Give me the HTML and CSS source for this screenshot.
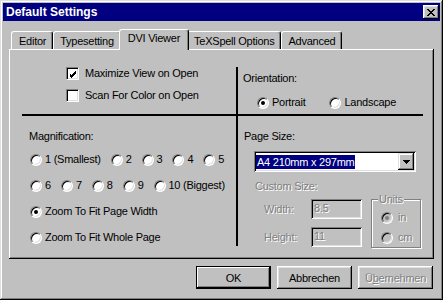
FILE: index.html
```html
<!DOCTYPE html>
<html lang="de">
<head>
  <meta charset="UTF-8" />
  <title>Default Settings</title>
  <link rel="stylesheet" href="styles.css">
</head>
<body>

  <div class="window">
    <div class="titlebar">
      <span class="title">Default Settings</span>
      <span class="close">
        <svg width="8" height="7" viewBox="0 0 8 7" shape-rendering="crispEdges">
          <path d="M0 0h2v1h1v1h2v-1h1v-1h2v1h-1v1h-1v1h-1v1h1v1h1v1h1v1h-2v-1h-1v-1h-2v1h-1v1h-2v-1h1v-1h1v-1h1v-1h-1v-1h-1v-1h-1z" fill="#000"/>
        </svg>
      </span>
    </div>

    <div class="tabs">
      <div class="tab">Editor</div>
      <div class="tab">Typesetting</div>
      <div class="tab active">DVI Viewer</div>
      <div class="tab">TeXSpell Options</div>
      <div class="tab">Advanced</div>
    </div>

    <div class="panel">
      <div class="sections">

        <div class="cell options">
          <div class="row">
            <span class="check">
              <svg width="7" height="7" viewBox="0 0 7 7" shape-rendering="crispEdges">
                <path d="M6 0v3h-1v1h-1v1h-1v1h-1v1h-1v-1h-1v-1h-1v-3h1v1h1v1h1v-1h1v-1h1v-1z" fill="#000"/>
              </svg>
            </span>
            <span>Maximize View on Open</span>
          </div>
          <div class="row">
            <span class="check"></span>
            <span>Scan For Color on Open</span>
          </div>
        </div>

        <div class="cell orientation">
          <div class="label">Orientation:</div>
          <div class="radios">
            <div class="row"><span class="radio on"></span><span>Portrait</span></div>
            <div class="row landscape"><span class="radio"></span><span>Landscape</span></div>
          </div>
        </div>

        <div class="cell magnification">
          <div class="label">Magnification:</div>
          <div class="radio-line">
            <div class="row"><span class="radio"></span><span>1 (Smallest)</span></div>
            <div class="row"><span class="radio"></span><span>2</span></div>
            <div class="row"><span class="radio"></span><span>3</span></div>
            <div class="row"><span class="radio"></span><span>4</span></div>
            <div class="row"><span class="radio"></span><span>5</span></div>
          </div>
          <div class="radio-line">
            <div class="row"><span class="radio"></span><span>6</span></div>
            <div class="row"><span class="radio"></span><span>7</span></div>
            <div class="row"><span class="radio"></span><span>8</span></div>
            <div class="row"><span class="radio"></span><span>9</span></div>
            <div class="row"><span class="radio"></span><span>10 (Biggest)</span></div>
          </div>
          <div class="row"><span class="radio on"></span><span>Zoom To Fit Page Width</span></div>
          <div class="row"><span class="radio"></span><span>Zoom To Fit Whole Page</span></div>
        </div>

        <div class="cell pagesize">
          <div class="label">Page Size:</div>
          <div class="combo">
            <span class="combo-value">A4 210mm x 297mm</span>
            <span class="combo-btn">
              <svg width="7" height="4" viewBox="0 0 7 4" shape-rendering="crispEdges">
                <path d="M0 0h7v1h-1v1h-1v1h-1v1h-1v-1h-1v-1h-1v-1h-1z" fill="#000"/>
              </svg>
            </span>
          </div>
          <div class="label disabled custom">Custom Size:</div>
          <div class="custom-row">
            <div class="fields">
              <div class="field"><span class="disabled">Width:</span><span class="input disabled">8.5</span></div>
              <div class="field"><span class="disabled">Height:</span><span class="input disabled">11</span></div>
            </div>
            <fieldset class="units">
              <legend class="disabled">Units</legend>
              <div class="row"><span class="radio off on"></span><span class="disabled">in</span></div>
              <div class="row"><span class="radio off"></span><span class="disabled">cm</span></div>
            </fieldset>
          </div>
        </div>

      </div>
    </div>

    <div class="buttons">
      <button class="btn default">OK</button>
      <button class="btn">Abbrechen</button>
      <button class="btn disabled">Ü<u>b</u>ernehmen</button>
    </div>
  </div>

</body>
</html>
```

FILE: styles.css
```css
body {
  margin: 0;
  background: #c0c0c0;
  font-family: "Liberation Sans", Arial, sans-serif;
  font-size: 11px;
  letter-spacing: -0.25px;
  color: #000;
}

.window {
  width: 443px;
  height: 300px;
  box-sizing: border-box;
  padding: 3px;
  display: flex;
  flex-direction: column;
  background: #c0c0c0;
  box-shadow: inset -1px -1px #000, inset 1px 1px #dfdfdf,
              inset -2px -2px #808080, inset 2px 2px #fff;
}

/* title bar */
.titlebar {
  height: 18px;
  background: #000080;
  color: #fff;
  display: flex;
  align-items: center;
  justify-content: space-between;
  padding: 0 1px 0 3px;
}

.title {
  font-size: 12px;
  font-weight: bold;
  letter-spacing: 0;
}

.close {
  width: 16px;
  height: 14px;
  background: #c0c0c0;
  display: flex;
  align-items: center;
  justify-content: center;
  box-shadow: inset -1px -1px #000, inset 1px 1px #fff,
              inset -2px -2px #808080, inset 2px 2px #dfdfdf;
}

/* tabs */
.tabs {
  display: flex;
  align-items: flex-end;
  height: 20px;
  margin: 8px 0 0 6px;
  padding-left: 2px;
  position: relative;
  z-index: 1;
}

.tab {
  height: 18px;
  box-sizing: border-box;
  padding: 3px 6px 0 6px;
  border-top: 1px solid #fff;
  border-left: 1px solid #fff;
  border-right: 1px solid #000;
  border-radius: 3px 3px 0 0;
  box-shadow: inset -1px 0 #808080;
  line-height: 13px;
}

.tab:first-child {
  padding: 3px 6px 0 7px;
}

.tab.active {
  height: 21px;
  margin: 0 -2px -1px -2px;
  padding: 2px 8px 0 8px;
  background: #c0c0c0;
  position: relative;
}

/* tab page */
.panel {
  width: 425px;
  height: 210px;
  box-sizing: border-box;
  margin-left: 6px;
  padding: 18px 0 0 13px;
  box-shadow: inset -1px -1px #000, inset 1px 1px #fff, inset -2px -2px #808080;
}

.sections {
  display: grid;
  grid-template-columns: 216px 185px;
  grid-template-rows: 49px 130px;
}

.cell {
  box-sizing: border-box;
}

.options {
  border-right: 2px solid #000;
  border-bottom: 2px solid #000;
  padding-left: 44px;
  display: flex;
  flex-direction: column;
  gap: 9px;
}

.orientation {
  border-bottom: 2px solid #000;
  padding: 5px 0 0 5px;
}

.magnification {
  border-right: 2px solid #000;
  padding: 14px 0 0 7px;
  display: flex;
  flex-direction: column;
  gap: 13px;
}

.magnification .label {
  margin-bottom: -3px;
}

.pagesize {
  padding: 14px 0 0 6px;
}

.label {
  line-height: 13px;
}

.row {
  display: flex;
  align-items: center;
  gap: 3px;
  height: 13px;
  line-height: 13px;
}

.options .row {
  gap: 6px;
}

.radios {
  display: flex;
  padding: 11px 0 0 14px;
}

.landscape {
  margin-left: 24px;
}

.radio-line {
  display: flex;
  gap: 10px;
  margin-left: 1px;
}

.magnification > .row {
  margin-left: 1px;
}

/* controls */
.check {
  width: 13px;
  height: 13px;
  box-sizing: border-box;
  background: #fff;
  border: 1px solid;
  border-color: #808080 #fff #fff #808080;
  box-shadow: inset 1px 1px #000, inset -1px -1px #dfdfdf;
  display: flex;
  align-items: center;
  justify-content: center;
  padding: 1px 0 0 1px;
}

.radio {
  width: 12px;
  height: 12px;
  flex: none;
  box-sizing: border-box;
  border-radius: 50%;
  background: #fff;
  border: 1px solid;
  border-color: #808080 #fff #fff #808080;
  box-shadow: inset 1px 1px #000, inset -1px -1px #dfdfdf;
  display: flex;
  align-items: center;
  justify-content: center;
}

.radio.on::after {
  content: "";
  width: 4px;
  height: 4px;
  border-radius: 50%;
  background: #000;
}

.radio.off {
  background: #c0c0c0;
}

.radio.off.on::after {
  background: #808080;
}

.disabled {
  color: #808080;
  text-shadow: 1px 1px 0 #fff;
}

.combo {
  width: 162px;
  height: 21px;
  box-sizing: border-box;
  margin: 8px 0 0 10px;
  padding: 2px;
  background: #fff;
  display: flex;
  align-items: center;
  justify-content: space-between;
  box-shadow: inset 1px 1px #808080, inset -1px -1px #fff,
              inset 2px 2px #000, inset -2px -2px #dfdfdf;
}

.combo-value {
  background: #000080;
  color: #fff;
  height: 14px;
  line-height: 14px;
  padding: 0 1px;
}

.combo-btn {
  width: 16px;
  height: 17px;
  background: #c0c0c0;
  display: flex;
  align-items: center;
  justify-content: center;
  box-shadow: inset -1px -1px #000, inset 1px 1px #dfdfdf,
              inset -2px -2px #808080, inset 2px 2px #fff;
}

.custom {
  margin: 8px 0 0 11px;
}

.custom-row {
  display: flex;
  margin-left: 11px;
}

.fields {
  display: flex;
  flex-direction: column;
  gap: 8px;
  padding: 6px 0 0 9px;
}

.field {
  display: flex;
  align-items: center;
  justify-content: space-between;
  width: 98px;
}

.input {
  width: 51px;
  height: 20px;
  box-sizing: border-box;
  padding: 3px 0 0 3px;
  line-height: 13px;
  box-shadow: inset 1px 1px #808080, inset -1px -1px #fff,
              inset 2px 2px #000, inset -2px -2px #dfdfdf;
}

.units {
  margin: 0 0 0 9px;
  width: 50px;
  height: 55px;
  box-sizing: border-box;
  padding: 5px 0 0 9px;
  border: 1px solid #808080;
  box-shadow: inset 1px 1px #fff, 1px 1px #fff;
  display: flex;
  flex-direction: column;
  gap: 7px;
}

.units legend {
  padding: 0 1px;
  margin-left: -3px;
  background: #c0c0c0;
  line-height: 13px;
}

.units .row {
  gap: 5px;
}

/* dialog buttons */
.buttons {
  display: flex;
  justify-content: flex-end;
  gap: 6px;
  margin-top: 7px;
  padding-right: 7px;
}

.btn {
  width: 75px;
  height: 23px;
  padding: 0;
  border: none;
  background: #c0c0c0;
  font-family: inherit;
  font-size: 11px;
  letter-spacing: inherit;
  color: #000;
  box-shadow: inset -1px -1px #000, inset 1px 1px #fff,
              inset -2px -2px #808080, inset 2px 2px #dfdfdf;
}

.btn.default {
  box-shadow: inset 0 0 0 1px #000, inset -2px -2px #000, inset 2px 2px #fff,
              inset -3px -3px #808080;
}

.btn.disabled {
  color: #808080;
}
```
